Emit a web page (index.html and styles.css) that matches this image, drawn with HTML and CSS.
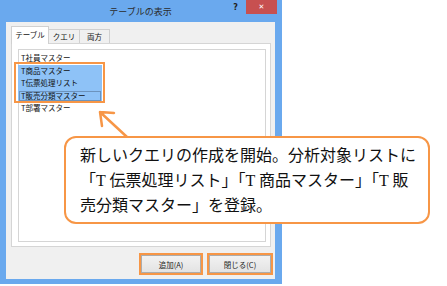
FILE: index.html
```html
<!DOCTYPE html>
<html lang="ja">
<head>
<meta charset="utf-8"/>
<title>テーブルの表示</title>
<link rel="stylesheet" href="styles.css">
</head>
<body>
<div class="window">
  <div class="titlebar">
    <span></span>
    <span class="title">テーブルの表示</span>
    <div class="controls">
      <span class="help">?</span>
      <span class="close">✕</span>
    </div>
  </div>
  <div class="client">
    <div class="tabs">
      <div class="tab active">テーブル</div>
      <div class="tab">クエリ</div>
      <div class="tab">両方</div>
    </div>
    <div class="panel">
      <ul class="list">
        <li>T社員マスター</li>
        <li class="sel">T商品マスター</li>
        <li class="sel">T伝票処理リスト</li>
        <li class="sel focus">T販売分類マスター</li>
        <li>T部署マスター</li>
      </ul>
    </div>
    <div class="buttons">
      <button class="btn mark">追加(A)</button>
      <button class="btn mark wide">閉じる(C)</button>
    </div>
  </div>
</div>

<div class="sel-mark"></div>

<svg class="arrow" width="447" height="286" viewBox="0 0 447 286">
  <path d="M127 137 L100 112 M100 112 L114 113 M100 112 L102 126" fill="none" stroke="#f79646" stroke-width="2.5" stroke-linecap="round" stroke-linejoin="round"/>
</svg>

<div class="callout">
  新しいクエリの作成を開始。分析対象リストに<br/>
  「T 伝票処理リスト」「T 商品マスター」「T 販<br/>
  売分類マスター」を登録。
</div>
</body>
</html>
```

FILE: styles.css
```css
body {
  margin: 0;
  background: #fff;
  font-family: "Noto Sans CJK JP", sans-serif;
  width: 447px;
  height: 286px;
  position: relative;
  overflow: hidden;
}
.window {
  width: 282px;
  height: 284px;
  background: #6aa9ee;
  padding: 0 7px 5px 6px;
  box-sizing: border-box;
  display: flex;
  flex-direction: column;
}
.titlebar {
  height: 22px;
  display: grid;
  grid-template-columns: 1fr auto 1fr;
  align-items: start;
}
.title {
  font-size: 9px;
  line-height: 24px;
  color: #2b2b2b;
}
.controls {
  display: flex;
  justify-content: flex-end;
  align-items: center;
  margin-right: -2px;
}
.help {
  font-family: "DejaVu Sans", sans-serif;
  font-weight: bold;
  font-size: 8px;
  color: #222;
  margin-right: 8px;
}
.close {
  width: 31px;
  height: 14px;
  background: #c75050;
  color: #fff;
  font-family: "DejaVu Sans", sans-serif;
  font-size: 7px;
  font-weight: bold;
  display: flex;
  align-items: center;
  justify-content: center;
}
.client {
  flex: 1;
  background: #f0f0f0;
  display: flex;
  flex-direction: column;
}
.tabs {
  display: flex;
  align-items: flex-end;
  margin: 4px 0 0 5px;
  height: 17px;
}
.tab {
  font-size: 7.5px;
  color: #111;
  height: 14px;
  line-height: 13px;
  padding: 0;
  text-align: center;
  white-space: nowrap;
  border: 1px solid #d0d0d0;
  border-bottom: none;
  background: #f0f0f0;
  box-sizing: border-box;
  width: 32px;
  margin-left: -1px;
}
.tab:first-child {
  margin-left: 0;
}
.tab.active {
  width: 38px;
  height: 18px;
  line-height: 16px;
  background: #fff;
  position: relative;
  z-index: 1;
  margin-bottom: -1px;
}
.tab:last-child {
  width: 31px;
}
.panel {
  height: 204px;
  margin: 0 4px 0 5px;
  border: 1px solid #d5d5d5;
  background: #fff;
  padding: 5px 4px 4px 6px;
  box-sizing: border-box;
}
.list {
  list-style: none;
  margin: 0;
  height: 100%;
  box-sizing: border-box;
  border: 1px solid #d5d5d5;
  padding: 2px 0 0 0;
}
.list li {
  font-size: 7.5px;
  line-height: 12.5px;
  height: 12.5px;
  color: #111;
  padding-left: 3px;
  width: 84px;
  white-space: nowrap;
  box-sizing: border-box;
  margin-left: -1px;
}
.list li.sel {
  background: #8ec2f7;
}
.list li.focus {
  outline: 1px solid #6c93bd;
  outline-offset: -2px;
}
.buttons {
  display: flex;
  justify-content: flex-end;
  gap: 8px;
  margin: 8px 4px 0 0;
}
.btn {
  font-family: "Noto Sans CJK JP", sans-serif;
  font-size: 7.5px;
  color: #222;
  width: 60px;
  height: 18px;
  padding: 0;
  border: 1px solid #acacac;
  background: linear-gradient(#f2f2f2, #e3e3e3);
  outline: 2px solid #f79646;
  outline-offset: 0;
}
.btn.wide {
  width: 62px;
}
.sel-mark {
  position: absolute;
  left: 14px;
  top: 62px;
  width: 91px;
  height: 41px;
  border: 2px solid #f79646;
  box-sizing: border-box;
}
.arrow {
  position: absolute;
  left: 0;
  top: 0;
}
.callout {
  position: absolute;
  left: 64px;
  top: 136px;
  width: 366px;
  height: 88px;
  box-sizing: border-box;
  border: 2px solid #f79646;
  border-radius: 12px;
  background: #fff;
  padding: 5px 0 0 14px;
  font-family: "Liberation Serif", "Noto Sans CJK JP", serif;
  font-size: 16px;
  line-height: 25px;
  color: #111;
  white-space: nowrap;
}
```
